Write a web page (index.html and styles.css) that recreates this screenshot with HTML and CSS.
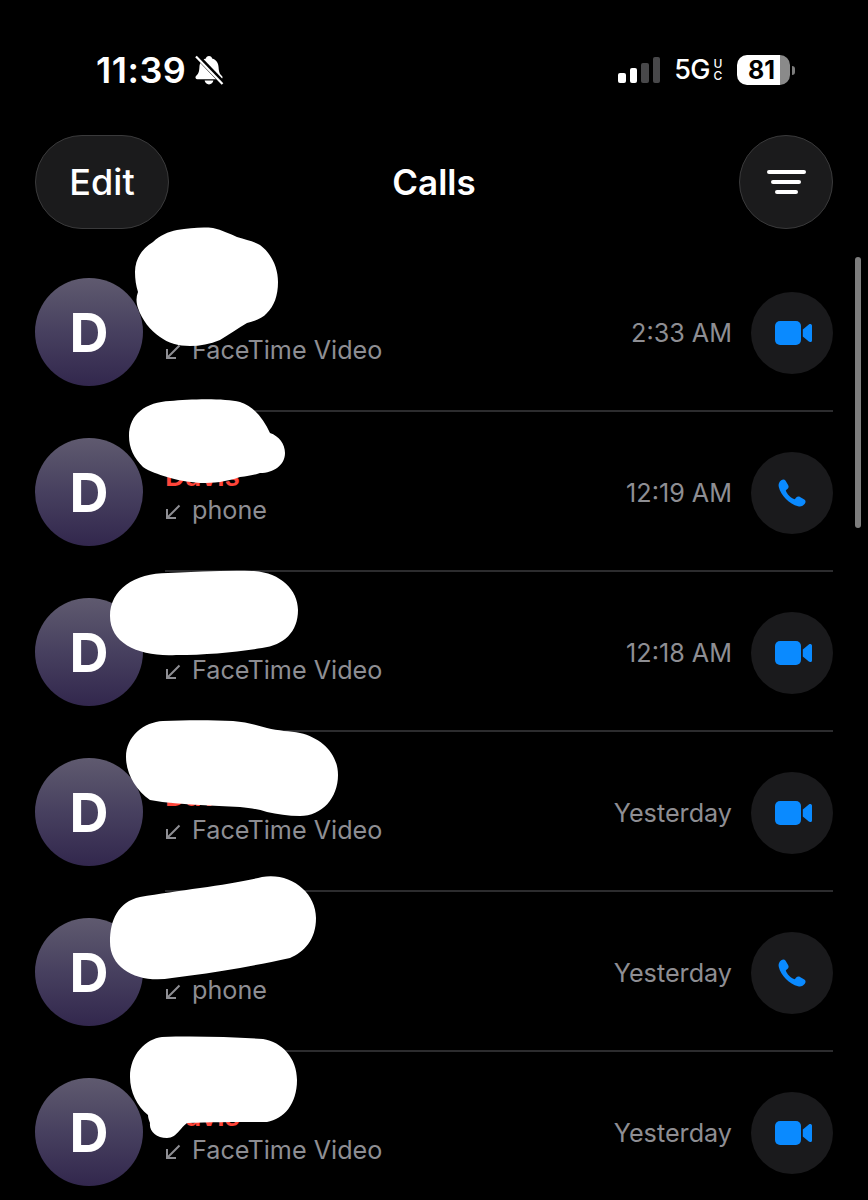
FILE: index.html
```html
<!DOCTYPE html>
<html lang="en">
<head>
<meta charset="utf-8">
<title>Calls</title>
<link rel="stylesheet" href="styles.css">
</head>
<body>
<svg width="0" height="0" class="defs">
  <defs>
    <symbol id="video" viewBox="0 0 37 24">
      <rect x="0" y="0" width="26" height="24" rx="5" fill="currentColor"/>
      <path d="M27.8 8.6 L33.8 3.4 C35 2.4 37 3 37 4.6 V19.4 C37 21 35 21.6 33.8 20.6 L27.8 15.4 Z" fill="currentColor"/>
    </symbol>
    <symbol id="phone" viewBox="0 0 28 28">
      <path d="M3.2 1.2 C5 0 6.6 .2 7.6 1.8 L10.2 6.2 C11 7.6 10.6 8.9 9.4 9.9 L7.8 11.2 C8.6 14.8 13 19.4 16.8 20.2 L18.2 18.6 C19.2 17.4 20.6 17.1 22 17.9 L26.3 20.6 C27.8 21.6 28 23.2 26.8 24.8 C25.3 26.9 22.8 27.9 20 27.2 C11.5 25.2 2.8 16.5 .8 8 C.1 5.2 1.1 2.8 3.2 1.2 Z" fill="currentColor"/>
    </symbol>
    <symbol id="arrow" viewBox="0 0 16 16">
      <path d="M14.5 1.5 L2 14 M2 5 V14 H11" fill="none" stroke="currentColor" stroke-width="2"/>
    </symbol>
  </defs>
</svg>
<main class="screen">
  <header class="status">
    <div class="status-left">
      <span class="clock">11:39</span>
      <svg class="bell" viewBox="0 0 30 30" width="30" height="30">
        <path d="M15 1 C16.8 1 17.9 2.1 18.1 3.6 C22.4 4.8 24.4 8 24.6 12.4 C24.8 17 25.8 18.8 28 21 C29.2 22.4 28.4 24.2 26.6 24.2 H3.4 C1.6 24.2 .8 22.4 2 21 C4.2 18.8 5.2 17 5.4 12.4 C5.6 8 7.6 4.8 11.9 3.6 C12.1 2.1 13.2 1 15 1 Z M10.6 25.6 H19.4 C19 28 17.2 29.4 15 29.4 C12.8 29.4 11 28 10.6 25.6 Z" fill="#fff"/>
        <path d="M3.5 1.5 L28 27" stroke="#000" stroke-width="5"/>
        <path d="M2 1.5 L28.5 29" stroke="#fff" stroke-width="2.2"/>
      </svg>
    </div>
    <div class="status-right">
      <div class="signal">
        <span class="bar bar-1"></span>
        <span class="bar bar-2"></span>
        <span class="bar bar-3"></span>
        <span class="bar bar-4"></span>
      </div>
      <div class="network">
        <span class="net-5g">5G</span>
        <span class="net-uc"><span class="uc">U</span><span class="uc">C</span></span>
      </div>
      <div class="battery">
        <div class="battery-body"><span class="battery-level">81</span></div>
        <span class="battery-nub"></span>
      </div>
    </div>
  </header>

  <nav class="toolbar">
    <button class="pill">Edit</button>
    <h1 class="title">Calls</h1>
    <button class="round" aria-label="Filter">
      <span class="line line-1"></span>
      <span class="line line-2"></span>
      <span class="line line-3"></span>
    </button>
  </nav>

  <ul class="calls">
    <li class="call">
      <div class="avatar">D</div>
      <div class="call-main">
        <div class="call-body">
          <div class="name">Davis</div>
          <div class="kind"><svg class="arrow"><use href="#arrow"/></svg><span>FaceTime Video</span></div>
        </div>
        <span class="when">2:33 AM</span>
        <span class="action"><svg class="ic-video"><use href="#video"/></svg></span>
      </div>
    </li>
    <li class="call">
      <div class="avatar">D</div>
      <div class="call-main">
        <div class="call-body">
          <div class="name">Davis</div>
          <div class="kind"><svg class="arrow"><use href="#arrow"/></svg><span>phone</span></div>
        </div>
        <span class="when">12:19 AM</span>
        <span class="action"><svg class="ic-phone"><use href="#phone"/></svg></span>
      </div>
    </li>
    <li class="call">
      <div class="avatar">D</div>
      <div class="call-main">
        <div class="call-body">
          <div class="name">Davis</div>
          <div class="kind"><svg class="arrow"><use href="#arrow"/></svg><span>FaceTime Video</span></div>
        </div>
        <span class="when">12:18 AM</span>
        <span class="action"><svg class="ic-video"><use href="#video"/></svg></span>
      </div>
    </li>
    <li class="call">
      <div class="avatar">D</div>
      <div class="call-main">
        <div class="call-body">
          <div class="name">Davis</div>
          <div class="kind"><svg class="arrow"><use href="#arrow"/></svg><span>FaceTime Video</span></div>
        </div>
        <span class="when">Yesterday</span>
        <span class="action"><svg class="ic-video"><use href="#video"/></svg></span>
      </div>
    </li>
    <li class="call">
      <div class="avatar">D</div>
      <div class="call-main">
        <div class="call-body">
          <div class="name">Davis</div>
          <div class="kind"><svg class="arrow"><use href="#arrow"/></svg><span>phone</span></div>
        </div>
        <span class="when">Yesterday</span>
        <span class="action"><svg class="ic-phone"><use href="#phone"/></svg></span>
      </div>
    </li>
    <li class="call">
      <div class="avatar">D</div>
      <div class="call-main">
        <div class="call-body">
          <div class="name">Davis</div>
          <div class="kind"><svg class="arrow"><use href="#arrow"/></svg><span>FaceTime Video</span></div>
        </div>
        <span class="when">Yesterday</span>
        <span class="action"><svg class="ic-video"><use href="#video"/></svg></span>
      </div>
    </li>
  </ul>

  <div class="scrollbar"></div>

  <svg class="scribbles" viewBox="0 0 868 1200" width="868" height="1200" aria-hidden="true">
    <path d="M135 272 C135 258 143 248 153 242 C160 235 168 232 177 230 C190 228 202 227 213 228 C222 230 230 234 237 237 C246 240 253 241 260 245 C272 254 278 268 278 282 C278 296 274 306 267 313 C262 319 254 321 247 323 C238 328 230 334 220 340 C210 344 200 346 190 346 C178 346 168 343 160 337 C150 330 142 320 138 308 C136 302 136 297 138 292 C136 286 135 279 135 272 Z" fill="#fff"/>
    <path d="M129 436 C129 414 146 402 170 401 C190 399 224 398 240 402 C254 406 264 420 270 433 C279 436 285 444 285 453 C285 465 274 473 260 473 C254 475 248 476 240 477 C226 482 214 483 200 483 C188 482 176 480 167 477 C158 474 150 472 143 467 C134 458 129 448 129 436 Z" fill="#fff"/>
    <path d="M110 616 C110 590 134 573 168 573 C196 572 226 570 252 571 C280 572 298 590 298 610 C298 632 284 645 262 648 C236 652 206 655 176 655 C140 657 110 644 110 616 Z" fill="#fff"/>
    <path d="M126 757 C126 736 144 722 163 721 C186 720 212 720 233 721 C246 722 256 725 267 728 C278 731 290 731 300 733 C322 738 338 754 338 775 C338 798 322 816 300 816 C288 816 277 814 267 812 C258 809 250 808 240 807 C226 806 212 806 200 805 C184 804 166 803 150 800 C136 790 126 774 126 757 Z" fill="#fff"/>
    <path d="M110 942 C110 920 118 902 140 897 C180 890 230 885 262 877 C290 872 316 892 316 918 C316 940 304 952 290 958 C272 962 256 965 240 968 C218 972 194 975 172 978 C140 984 110 970 110 942 Z" fill="#fff"/>
    <path d="M130 1077 C130 1054 146 1039 162 1037 C196 1036 232 1037 263 1039 C282 1042 297 1058 297 1080 C297 1104 284 1119 267 1122 C242 1122 212 1122 187 1123 C183 1126 181 1129 180 1130 C176 1135 172 1138 167 1138 C156 1138 149 1131 150 1123 C149 1120 148 1118 148 1115 C137 1106 130 1092 130 1077 Z" fill="#fff"/>
  </svg>
</main>
</body>
</html>
```

FILE: styles.css
```css
* { box-sizing: border-box; }

html, body {
  margin: 0;
  padding: 0;
  background: #000;
}

.defs { position: absolute; }

.screen {
  position: relative;
  width: 868px;
  height: 1200px;
  overflow: hidden;
  background: #000;
  color: #fff;
  font-family: Inter, "Liberation Sans", sans-serif;
}

/* status bar */
.status {
  height: 135px;
  padding: 48px 73px 0 96px;
  display: flex;
  justify-content: space-between;
  align-items: flex-start;
}

.status-left {
  display: flex;
  align-items: center;
  gap: 8px;
  height: 44px;
}

.clock {
  font-size: 36px;
  font-weight: 600;
  letter-spacing: 0.5px;
  line-height: 44px;
}

.bell { display: block; }

.status-right {
  display: flex;
  align-items: center;
  height: 44px;
}

.signal {
  display: flex;
  align-items: flex-end;
  gap: 4px;
  height: 26px;
  margin-right: 14px;
  margin-top: -1px;
}

.bar {
  width: 7.5px;
  border-radius: 2px;
  background: #fff;
}

.bar-1 { height: 10px; }
.bar-2 { height: 15px; }
.bar-3 { height: 20px; background: #48484a; }
.bar-4 { height: 26px; background: #48484a; }

.network {
  display: flex;
  align-items: center;
  margin-right: 14px;
  gap: 3px;
}

.net-5g {
  font-size: 27px;
  font-weight: 500;
  line-height: 30px;
  letter-spacing: -0.5px;
}

.net-uc {
  display: flex;
  flex-direction: column;
  width: 10px;
  text-align: center;
}

.uc {
  display: block;
  font-size: 12px;
  font-weight: 500;
  line-height: 12px;
}

.battery {
  display: flex;
  align-items: center;
  gap: 2px;
}

.battery-body {
  width: 53px;
  height: 30px;
  border-radius: 10px;
  background: linear-gradient(90deg, #fff 81%, #8a8a8a 81%);
  display: flex;
  align-items: center;
  padding-left: 11px;
}

.battery-level {
  color: #000;
  font-size: 25px;
  font-weight: 700;
  line-height: 30px;
}

.battery-nub {
  width: 3px;
  height: 9px;
  border-radius: 0 3px 3px 0;
  background: #7c7c7c;
}

/* toolbar */
.toolbar {
  height: 117px;
  padding: 0 35px;
  display: grid;
  grid-template-columns: 1fr auto 1fr;
  align-items: start;
}

.pill,
.round {
  height: 94px;
  background: #1b1b1c;
  border: 1.5px solid #3a3a3b;
  color: #fff;
  font-family: inherit;
  padding: 0;
}

.pill {
  width: 134px;
  border-radius: 47px;
  font-size: 36px;
  font-weight: 500;
}

.title {
  margin: 0;
  font-size: 35px;
  font-weight: 600;
  line-height: 94px;
}

.round {
  width: 94px;
  justify-self: end;
  border-radius: 50%;
  display: flex;
  flex-direction: column;
  align-items: center;
  justify-content: center;
  gap: 6.8px;
}

.line {
  height: 3.2px;
  border-radius: 2px;
  background: #fff;
}

.line-1 { width: 39px; }
.line-2 { width: 30px; }
.line-3 { width: 23px; }

/* list */
.calls {
  margin: 0;
  padding: 0 35px;
  list-style: none;
}

.call {
  height: 160px;
  display: flex;
  align-items: center;
  gap: 22px;
}

.avatar {
  flex: none;
  width: 108px;
  height: 108px;
  border-radius: 50%;
  background: linear-gradient(180deg, #5f5a6f 0%, #47405f 50%, #32274d 100%);
  display: flex;
  align-items: center;
  justify-content: center;
  font-size: 54px;
  font-weight: 700;
  color: #fff;
}

.call-main {
  flex: 1;
  height: 160px;
  padding-top: 3px;
  display: flex;
  align-items: center;
  border-bottom: 2px solid #2c2c2e;
}

.call-body {
  flex: 1;
  margin-top: -1px;
}

.name {
  color: #ff453a;
  font-size: 28px;
  font-weight: 600;
  line-height: 36px;
}

.kind {
  display: flex;
  align-items: center;
  gap: 11px;
  color: #8e8e93;
  font-size: 25.2px;
  line-height: 32px;
}

.arrow {
  width: 16px;
  height: 16px;
  margin-top: 3px;
  color: #8e8e93;
}

.when {
  color: #8e8e93;
  font-size: 25.2px;
  margin-right: 19px;
}

.action {
  flex: none;
  width: 82px;
  height: 82px;
  border-radius: 50%;
  background: #1a1a1c;
  color: #0a8aff;
  display: flex;
  align-items: center;
  justify-content: center;
}

.ic-video { width: 37px; height: 24px; margin-left: 2px; }
.ic-phone { width: 28px; height: 28px; }

/* overlays */
.scrollbar {
  position: absolute;
  left: 855px;
  top: 257px;
  width: 6px;
  height: 271px;
  border-radius: 3px;
  background: #7d7d7d;
}

.scribbles {
  position: absolute;
  left: 0;
  top: 0;
  pointer-events: none;
}
```
